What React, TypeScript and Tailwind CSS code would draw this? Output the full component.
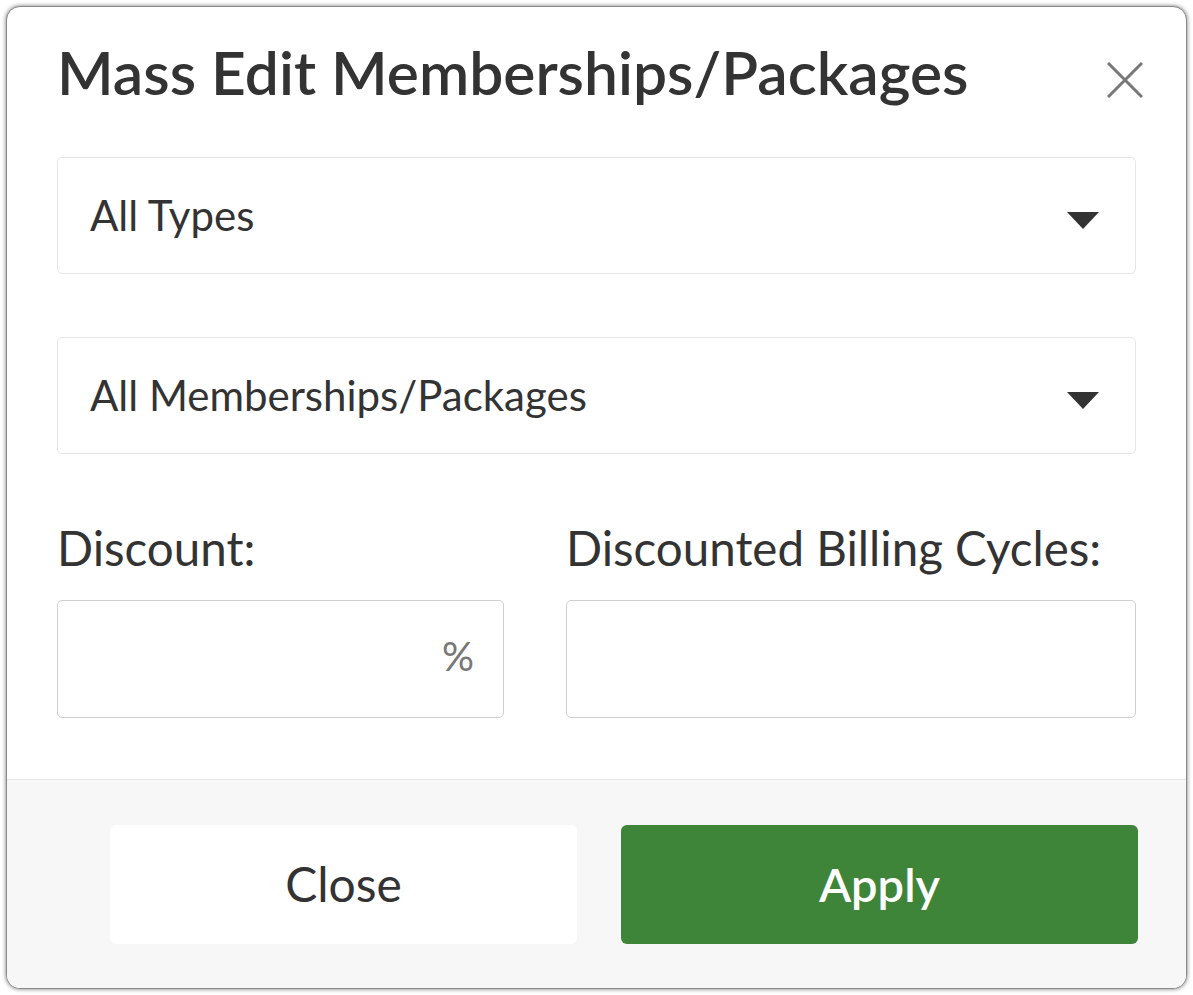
import React from "react";

const font = { fontFamily: "Lato, 'Open Sans', sans-serif" };

function Caret() {
  return (
    <svg width="32" height="17" viewBox="0 0 32 17" className="mt-[10px] shrink-0">
      <polygon points="0,0 32,0 16,17" fill="#333333" />
    </svg>
  );
}

function Select({ label }: { label: string }) {
  return (
    <div className="flex h-[117px] items-center justify-between rounded-[5px] border border-[#e6e6e6] bg-white pl-[32px] pr-[36px]">
      <span className="text-[42px] text-[#333333]">{label}</span>
      <Caret />
    </div>
  );
}

export default function App() {
  return (
    <div className="min-h-[995px] w-[1193px] bg-white p-[6px]" style={font}>
      <div className="flex h-[983px] w-[1181px] flex-col overflow-hidden rounded-[14px] border border-[#8a8a8a] bg-white shadow-[0_0_4px_rgba(0,0,0,0.55)]">
        <div className="flex flex-col px-[50px] pt-[30px]">
          <div className="flex h-[76px] items-start justify-between">
            <h1 className="whitespace-nowrap text-[60.5px] font-semibold leading-[70px] text-[#333333]">Mass Edit Memberships/Packages</h1>
            <button className="mr-[-14px] mt-[18px] flex h-[50px] w-[50px] items-center justify-center">
              <svg width="36" height="36" viewBox="0 0 36 36">
                <path d="M1 1 L35 35 M35 1 L1 35" stroke="#777777" strokeWidth="3" />
              </svg>
            </button>
          </div>
          <div className="mt-[44px] flex flex-col gap-[63px]">
            <Select label="All Types" />
            <Select label="All Memberships/Packages" />
          </div>
          <div className="mt-[64px] flex gap-[62px]">
            <div className="flex w-[447px] flex-col">
              <label className="whitespace-nowrap text-[47.5px] leading-[60px] text-[#333333]">Discount:</label>
              <div className="mt-[22px] flex h-[118px] items-center justify-end rounded-[5px] border border-[#cfcfcf] bg-white pb-[6px] pr-[29px]">
                <span className="text-[40px] text-[#777777]">%</span>
              </div>
            </div>
            <div className="flex flex-1 flex-col">
              <label className="whitespace-nowrap text-[47.5px] leading-[60px] text-[#333333]">Discounted Billing Cycles:</label>
              <div className="mt-[22px] h-[118px] rounded-[5px] border border-[#cfcfcf] bg-white" />
            </div>
          </div>
        </div>
        <div className="mt-auto flex h-[209px] items-center gap-[44px] border-t border-[#e6e6e6] bg-[#f7f7f7] pl-[103px] pr-[48px]">
          <button className="h-[119px] w-[467px] rounded-[6px] bg-white text-[48px] text-[#333333]">Close</button>
          <button className="h-[119px] flex-1 rounded-[6px] bg-[#3e8439] text-[47px] font-semibold text-white">Apply</button>
        </div>
      </div>
    </div>
  );
}
